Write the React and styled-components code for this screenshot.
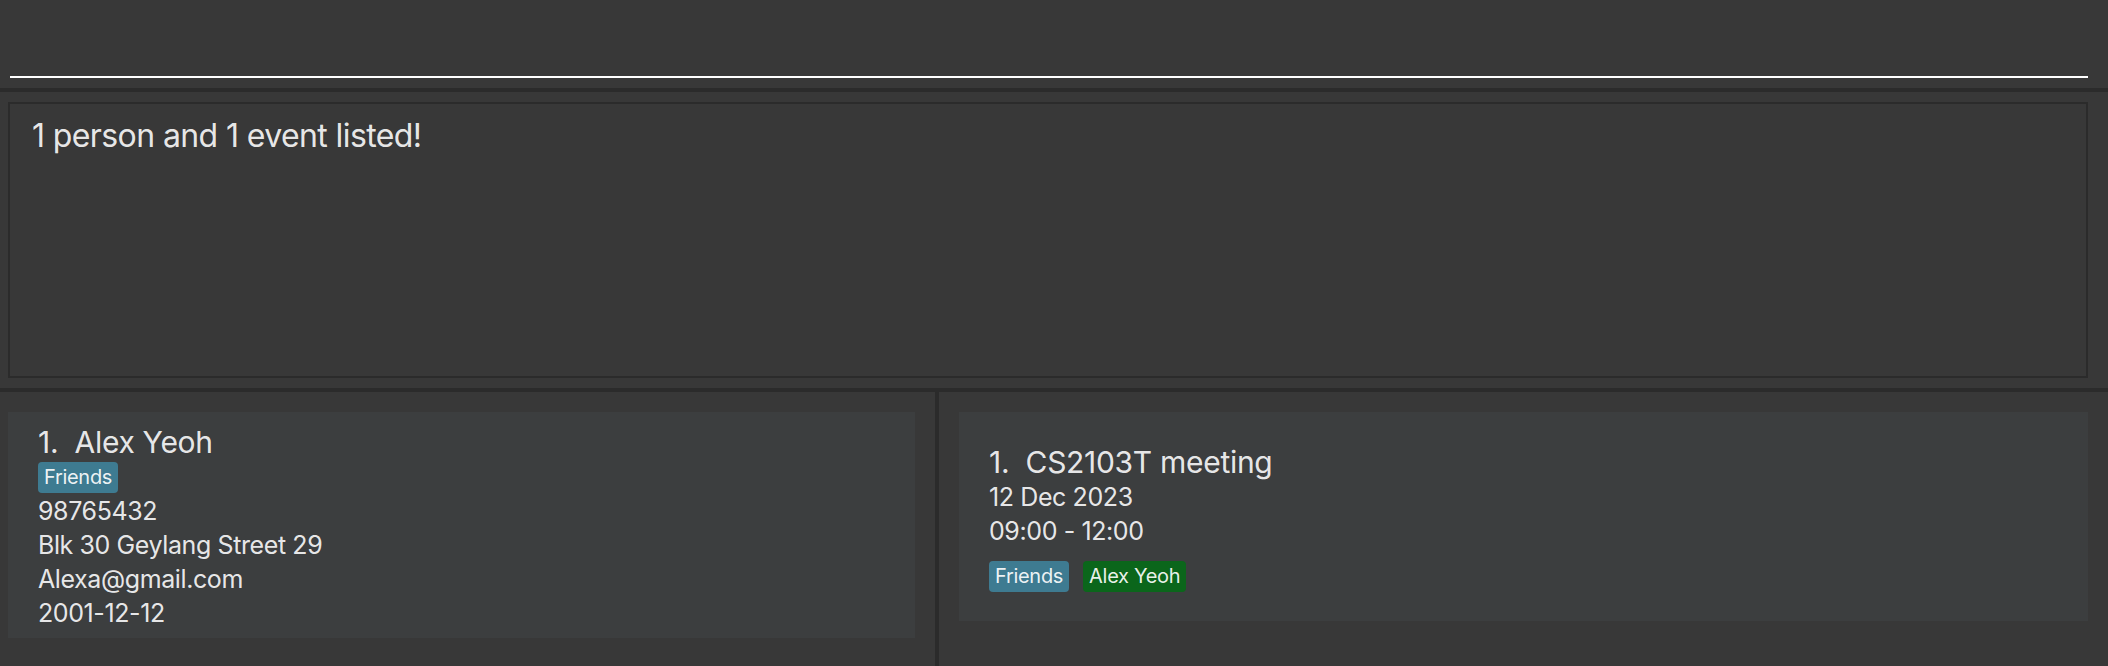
import styled, { createGlobalStyle } from "styled-components";

const GlobalStyle = createGlobalStyle`
  html, body {
    margin: 0;
    padding: 0;
    background: #383838;
  }
  body {
    font-family: Inter, "Noto Sans", sans-serif;
    color: rgba(255, 255, 255, 0.9);
  }
`;

const Window = styled.div`
  display: flex;
  flex-direction: column;
  height: 666px;
  background: #383838;
  overflow: hidden;
`;

const CommandBox = styled.div`
  height: 88px;
  box-sizing: border-box;
  padding: 0 20px 10px 10px;
  display: flex;
  flex-direction: column;
  justify-content: flex-end;
`;

const CommandInput = styled.div`
  height: 40px;
  border-bottom: 2px solid #ffffff;
`;

const Divider = styled.div`
  background: #2b2b2b;
  flex: none;
  ${(p) => (p.vertical ? "width: 4px;" : "height: 4px;")}
`;

const ResultPane = styled.div`
  height: 296px;
  box-sizing: border-box;
  padding: 10px 20px 10px 8px;
  display: flex;
`;

const ResultBox = styled.div`
  flex: 1;
  border: 2px solid #2b2b2b;
  padding: 13px 22px;
  font-size: 32px;
  line-height: 38px;
  letter-spacing: -0.6px;
`;

const Lists = styled.div`
  flex: 1;
  display: grid;
  grid-template-columns: 935px 4px 1fr;
`;

const ListPane = styled.div`
  padding: 20px ${(p) => p.right}px 0 ${(p) => p.left}px;
`;

const Card = styled.div`
  background: #3c3e3f;
  padding: ${(p) => p.top}px 30px ${(p) => p.bottom}px;
`;

const Title = styled.div`
  font-size: 30px;
  line-height: 36px;
  letter-spacing: -0.3px;
  white-space: pre;
`;

const Line = styled.div`
  font-size: 25px;
  line-height: 34px;
  letter-spacing: -0.4px;
`;

const Tags = styled.div`
  display: flex;
  gap: 14px;
  margin: ${(p) => p.margin || "0"};
`;

const Tag = styled.span`
  background: ${(p) => p.color || "#3e7b91"};
  border-radius: 4px;
  padding: 2px 6px;
  font-size: 20px;
  line-height: 27px;
  letter-spacing: -0.3px;
  color: rgba(255, 255, 255, 0.92);
`;

export default function App() {
  return (
    <>
      <GlobalStyle />
      <Window>
        <CommandBox>
          <CommandInput />
        </CommandBox>
        <Divider />
        <ResultPane>
          <ResultBox>1 person and 1 event listed!</ResultBox>
        </ResultPane>
        <Divider />
        <Lists>
          <ListPane left={8} right={20}>
            <Card top={12} bottom={8}>
              <Title>1.  Alex Yeoh</Title>
              <Tags margin="2px 0 1px">
                <Tag>Friends</Tag>
              </Tags>
              <Line>98765432</Line>
              <Line>Blk 30 Geylang Street 29</Line>
              <Line>Alexa@gmail.com</Line>
              <Line>2001-12-12</Line>
            </Card>
          </ListPane>
          <Divider vertical />
          <ListPane left={20} right={20}>
            <Card top={32} bottom={29}>
              <Title>1.  CS2103T meeting</Title>
              <Line>12 Dec 2023</Line>
              <Line>09:00 - 12:00</Line>
              <Tags margin="13px 0 0">
                <Tag>Friends</Tag>
                <Tag color="#0b661b">Alex Yeoh</Tag>
              </Tags>
            </Card>
          </ListPane>
        </Lists>
      </Window>
    </>
  );
}
